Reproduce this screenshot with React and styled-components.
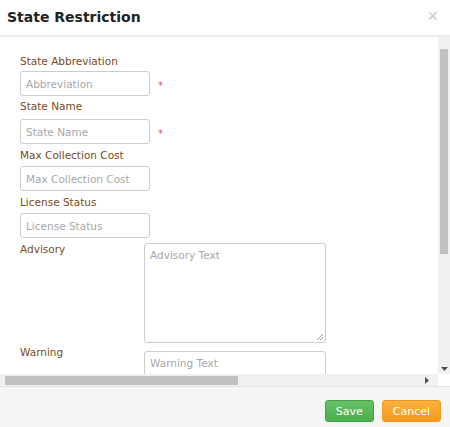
import React from 'react';
import styled, { createGlobalStyle } from 'styled-components';

const Global = createGlobalStyle`
  body { margin: 0; font-family: Tahoma, "DejaVu Sans", sans-serif; background: #fff; }
`;

const Modal = styled.div`
  width: 450px;
  height: 427px;
  display: flex;
  flex-direction: column;
  overflow: hidden;
`;

const Header = styled.div`
  height: 33px;
  border-bottom: 2px solid #ececec;
  display: flex;
  align-items: center;
  justify-content: space-between;
  padding: 0 12px 2px 7px;
`;

const Title = styled.h1`
  margin: 0;
  font-size: 14px;
  font-weight: bold;
  color: #222;
`;

const Close = styled.span`
  color: #c8c8c8;
  font-size: 18px;
  font-family: "Liberation Sans", sans-serif;
`;

const Viewport = styled.div`
  flex: 1;
  display: grid;
  grid-template-columns: 1fr 12px;
  grid-template-rows: 1fr 12px;
  min-height: 0;
`;

const Content = styled.div`
  padding: 18px 0 0 20px;
  overflow: hidden;
`;

const Label = styled.div`
  font-size: 10.5px;
  line-height: 13px;
  color: #7a4a1e;
  margin-bottom: ${p => p.$mb || 4}px;
`;

const Row = styled.div`
  display: flex;
  align-items: center;
  margin-bottom: ${p => p.$mb || 5}px;
`;

const Input = styled.div`
  width: 118px;
  height: 23px;
  border: 1px solid #ccc;
  border-radius: 3px;
  padding: 0 5px;
  font-size: 10.5px;
  color: #a8a8a8;
  display: flex;
  align-items: center;
`;

const Star = styled.span`
  color: #e05050;
  font-size: 10px;
  margin-left: 8px;
  padding-top: 4px;
`;

const AreaRow = styled.div`
  display: flex;
  align-items: flex-start;
  margin-bottom: 8px;
`;

const AreaLabel = styled(Label)`
  width: 124px;
  margin-top: ${p => p.$mt || 0}px;
`;

const Area = styled.div`
  position: relative;
  width: 170px;
  height: 88px;
  border: 1px solid #ccc;
  border-radius: 3px;
  padding: 5px;
  font-size: 10.5px;
  color: #a8a8a8;
`;

const VBar = styled.div`
  background: #f1f1f1;
  display: flex;
  flex-direction: column;
  align-items: center;
  justify-content: space-between;
  padding: 12px 0 2px;
`;

const Thumb = styled.div`
  width: 8px;
  height: 205px;
  background: #c1c1c1;
  flex: none;
`;

const HBar = styled.div`
  background: #f1f1f1;
  display: flex;
  align-items: center;
  justify-content: space-between;
  padding: 0 8px 0 5px;
`;

const HThumb = styled.div`
  width: 233px;
  height: 9px;
  background: #c1c1c1;
`;

const Corner = styled.div`
  background: #fff;
`;

const Footer = styled.div`
  height: 38px;
  border-top: 1px solid #e2e2e2;
  background: #f5f5f5;
  display: flex;
  justify-content: flex-end;
  align-items: center;
  gap: 8px;
  padding: 0 9px 2px 0;
`;

const Button = styled.button`
  height: 22px;
  padding: 0 ${p => p.$px}px;
  border: 1px solid ${p => p.$border};
  border-radius: 3px;
  background: linear-gradient(${p => p.$top}, ${p => p.$bg});
  color: #fff;
  font-family: inherit;
  font-size: 11px;
  margin-top: 10px;
`;

export default function App() {
  return (
    <Modal>
      <Global />
      <Header>
        <Title>State Restriction</Title>
        <Close>×</Close>
      </Header>
      <Viewport>
        <Content>
          <Label $mb={3}>State Abbreviation</Label>
          <Row $mb={4}><Input>Abbreviation</Input><Star>*</Star></Row>
          <Label $mb={6}>State Name</Label>
          <Row $mb={5}><Input>State Name</Input><Star>*</Star></Row>
          <Label $mb={4}>Max Collection Cost</Label>
          <Row $mb={5}><Input>Max Collection Cost</Input></Row>
          <Label $mb={4}>License Status</Label>
          <Row $mb={5}><Input>License Status</Input></Row>
          <AreaRow>
            <AreaLabel>Advisory</AreaLabel>
            <Area>
              Advisory Text
              <svg width="7" height="7" style={{ position: 'absolute', right: 2, bottom: 2 }}>
                <path d="M1 7 L7 1 M4 7 L7 4" stroke="#999" strokeWidth="1" />
              </svg>
            </Area>
          </AreaRow>
          <AreaRow>
            <AreaLabel $mt={-5}>Warning</AreaLabel>
            <Area>Warning Text</Area>
          </AreaRow>
        </Content>
        <VBar>
          <Thumb />
          <svg width="7" height="5"><path d="M0 0 H7 L3.5 4 Z" fill="#505050" /></svg>
        </VBar>
        <HBar>
          <HThumb />
          <svg width="5" height="7"><path d="M0 0 V7 L4 3.5 Z" fill="#505050" /></svg>
        </HBar>
        <Corner />
      </Viewport>
      <Footer>
        <Button $px={10} $border="#4a9d4a" $top="#66c266" $bg="#4cae4c">Save</Button>
        <Button $px={10} $border="#ec971f" $top="#fbb040" $bg="#f39a1a">Cancel</Button>
      </Footer>
    </Modal>
  );
}
